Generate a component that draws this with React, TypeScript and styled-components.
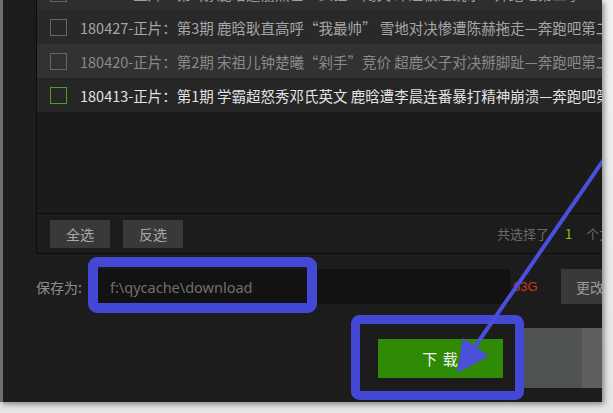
import styled, { createGlobalStyle } from "styled-components";

const GlobalStyle = createGlobalStyle`
  html, body {
    margin: 0;
    padding: 0;
    background: #ececec;
  }
  body {
    font-family: "Noto Sans CJK SC", "Noto Sans", sans-serif;
  }
`;

const Page = styled.div`
  width: 613px;
  height: 413px;
  overflow: hidden;
  background: linear-gradient(#f2f2f2, #e6e6e6);
`;

const Window = styled.div`
  position: relative;
  width: 599px;
  height: 402px;
  border-left: 3px solid #6f6f6f;
  background: #1c1c1c;
  box-shadow: 2px 2px 6px rgba(0, 0, 0, 0.45);
  overflow: hidden;
  display: flex;
  flex-direction: column;
`;

const Panel = styled.div`
  width: 620px;
  margin-left: 33px;
  flex-shrink: 0;
  border-left: 1px solid #0c0c0c;
  border-bottom: 1px solid #0c0c0c;
  display: flex;
  flex-direction: column;
`;

const List = styled.div`
  height: 213px;
  overflow: hidden;
  background: #1b1b1b;
`;

/* the list is scrolled: only the bottom of the first row shows */
const Track = styled.div<{ $scroll: number }>`
  margin-top: ${(p) => -p.$scroll}px;
`;

const Row = styled.div<{ $bg: string; $color: string }>`
  height: 34px;
  display: flex;
  align-items: center;
  gap: 13px;
  padding-left: 13px;
  background: ${(p) => p.$bg};
  color: ${(p) => p.$color};
  font-size: 14.5px;
  white-space: nowrap;
`;

const Check = styled.span<{ $active?: boolean }>`
  width: 15px;
  height: 15px;
  flex-shrink: 0;
  border: 1px solid ${(p) => (p.$active ? "#4f9f1f" : "#666")};
`;

const Toolbar = styled.div`
  height: 39px;
  border-top: 1px solid #0c0c0c;
  display: flex;
  align-items: center;
  padding-left: 13px;
  gap: 13px;
  background: #1c1c1c;
`;

const ToolButton = styled.button`
  width: 60px;
  height: 28px;
  border: none;
  background: #393939;
  color: #a9a9a9;
  font-family: inherit;
  font-size: 14px;
  padding: 0;
`;

const Summary = styled.span`
  margin-left: 301px;
  color: #6a6a6a;
  font-size: 13px;
  white-space: nowrap;
`;

const Count = styled.span`
  color: #8cbf1c;
  margin: 0 14px 0 16px;
`;

const SaveRow = styled.div`
  height: 35px;
  margin-top: 15px;
  padding-left: 33px;
  display: flex;
  align-items: center;
  white-space: nowrap;
`;

const Label = styled.span`
  width: 62px;
  flex-shrink: 0;
  color: #8e8e8e;
  font-size: 14px;
`;

const PathInput = styled.div`
  width: 400px;
  height: 35px;
  flex-shrink: 0;
  background: #121212;
  color: #707070;
  font-family: "Noto Sans", sans-serif;
  font-size: 14.5px;
  display: flex;
  align-items: center;
  padding-left: 12px;
`;

const FreeSpace = styled.span`
  margin-left: 3px;
  width: 48px;
  flex-shrink: 0;
  color: #c8391c;
  font-family: "Liberation Sans", sans-serif;
  font-size: 13px;
`;

const ChangeButton = styled.div`
  height: 35px;
  flex-shrink: 0;
  padding: 0 15px;
  background: #393939;
  color: #999;
  font-size: 14px;
  display: flex;
  align-items: center;
`;

const ActionRow = styled.div`
  height: 60px;
  margin-top: 24px;
  padding-left: 375px;
  display: flex;
  align-items: center;
`;

const DownloadButton = styled.button`
  width: 125px;
  height: 39px;
  flex-shrink: 0;
  border: none;
  padding: 0;
  background: #2f8a06;
  color: #f2f2f2;
  font-family: inherit;
  font-size: 15px;
  letter-spacing: 1px;
`;

const SidePane = styled.div<{ $shade: string; $width?: number }>`
  align-self: stretch;
  flex: ${(p) => (p.$width ? `0 0 ${p.$width}px` : "1")};
  background: ${(p) => p.$shade};
`;

const Overlay = styled.svg`
  position: absolute;
  left: 0;
  top: 0;
  pointer-events: none;
`;

const rows = [
  { bg: "#2e2e2e", color: "#a0a0a0", text: "180504-正片：第4期 鹿晗迪丽热巴“疯狂”闯关 邓超被逼跳水—奔跑吧第二季" },
  { bg: "#292929", color: "#a6a6a6", text: "180427-正片：第3期 鹿晗耿直高呼“我最帅”  雪地对决惨遭陈赫拖走—奔跑吧第二季" },
  { bg: "#323232", color: "#8a8a8a", text: "180420-正片：第2期 宋祖儿钟楚曦“剁手”竞价 超鹿父子对决掰脚趾—奔跑吧第二季" },
  { bg: "#262626", color: "#e2e2e2", text: "180413-正片：第1期 学霸超怒秀邓氏英文 鹿晗遭李晨连番暴打精神崩溃—奔跑吧第二季", active: true },
];

export default function App() {
  return (
    <Page>
      <GlobalStyle />
      <Window>
        <Panel>
          <List>
            <Track $scroll={24}>
              {rows.map((r) => (
                <Row key={r.text} $bg={r.bg} $color={r.color}>
                  <Check $active={r.active} />
                  {r.text}
                </Row>
              ))}
            </Track>
          </List>
          <Toolbar>
            <ToolButton>全选</ToolButton>
            <ToolButton>反选</ToolButton>
            <Summary>
              共选择了<Count>1</Count>个文件
            </Summary>
          </Toolbar>
        </Panel>

        <SaveRow>
          <Label>保存为:</Label>
          <PathInput>f:\qycache\download</PathInput>
          <FreeSpace>63G</FreeSpace>
          <ChangeButton>更改目录</ChangeButton>
        </SaveRow>

        <ActionRow>
          <DownloadButton>下 载</DownloadButton>
          <SidePane $shade="#1c1c1c" $width={15} />
          <SidePane $shade="#4f5353" $width={64} />
          <SidePane $shade="#5f5f5f" />
        </ActionRow>

        <Overlay width={599} height={402} viewBox="3 0 599 402">
          <rect x={93} y={262} width={219} height={46} rx={4} fill="none" stroke="#4349d4" strokeWidth={10} />
          <rect x={355.5} y={319.5} width={164} height={76} rx={4} fill="none" stroke="#4349d4" strokeWidth={9} />
          <line x1={616} y1={142} x2={472} y2={351} stroke="#4a50dc" strokeWidth={4} />
          <polygon points="457,373 463,338 489,356" fill="#4a50dc" />
        </Overlay>
      </Window>
    </Page>
  );
}
